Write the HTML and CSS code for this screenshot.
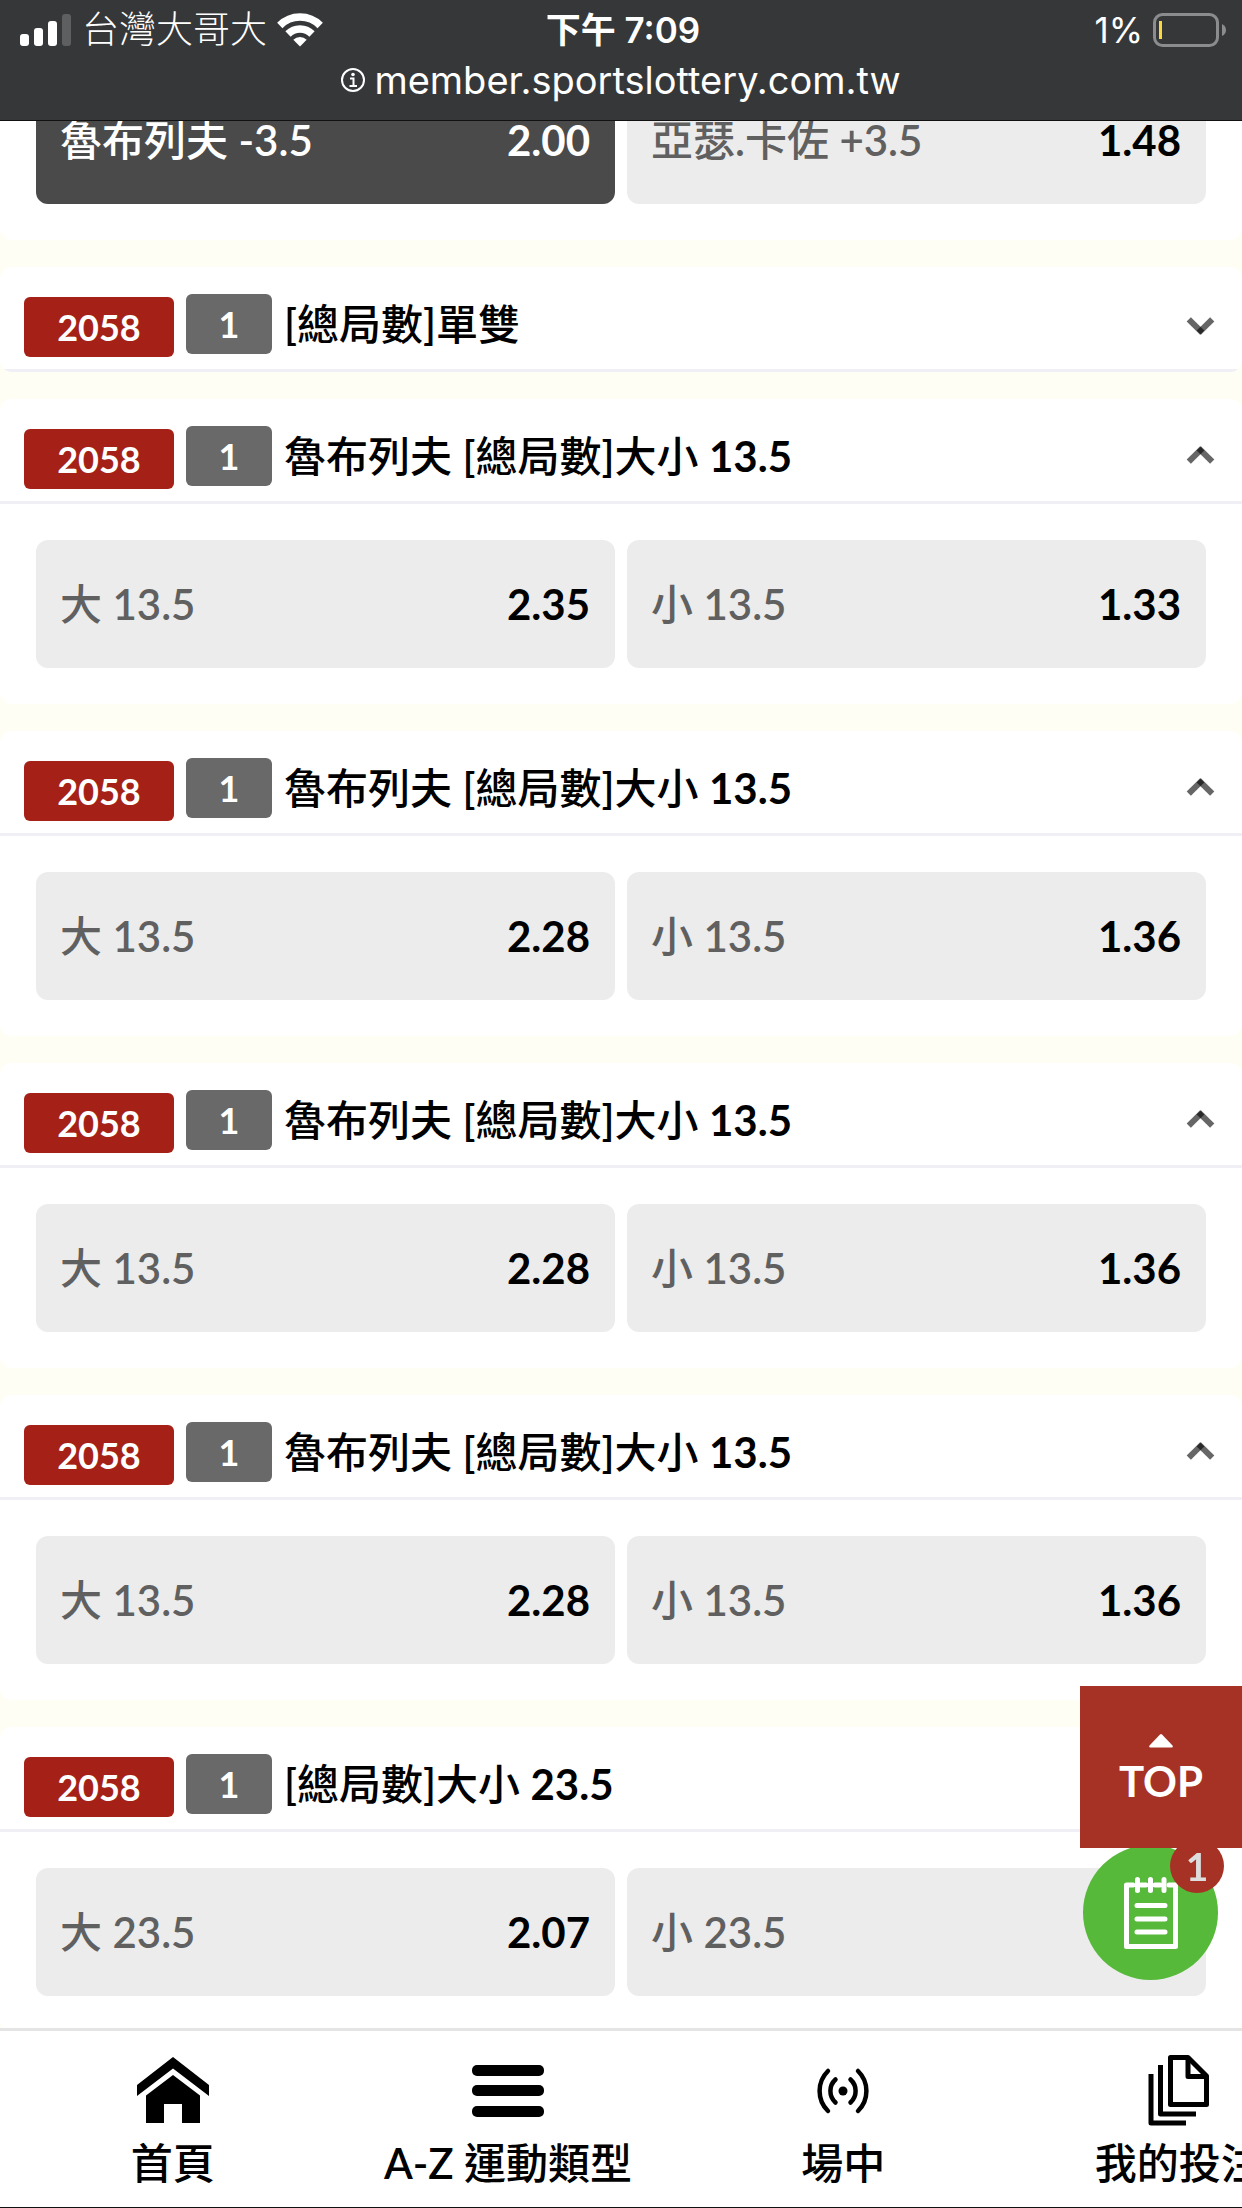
FILE: index.html
```html
<!DOCTYPE html>
<html lang="zh-Hant">
<head>
  <meta charset="UTF-8" />
  <meta name="viewport" content="width=device-width, initial-scale=1" />
  <title>台灣運彩</title>
  <link rel="stylesheet" href="styles.css">
</head>
<body>
  <header class="phone-bar">
    <div class="status">
      <div class="status-left">
        <svg class="signal" width="52" height="32" viewBox="0 0 52 32" fill="#fff" aria-hidden="true">
          <rect x="0" y="20" width="9" height="12" rx="3" />
          <rect x="14" y="14" width="9" height="18" rx="3" />
          <rect x="28" y="7" width="9" height="25" rx="3" />
          <rect x="42" y="0" width="9" height="32" rx="3" opacity="0.2" />
        </svg>
        <span class="carrier">台灣大哥大</span>
        <svg width="46" height="34" viewBox="0 0 46 34" fill="none" stroke="#fff" stroke-width="7.500" aria-hidden="true">
          <path d="M2.800 12.500a28.500 28.500 0 0 1 40.400 0" />
          <path d="M11 21a17 17 0 0 1 24 0" />
          <path d="M23 33.500l-6.700-6.700a9.500 9.500 0 0 1 13.400 0z" fill="#fff" stroke="none" />
        </svg>
      </div>
      <span class="clock">下午 7:09</span>
      <div class="status-right">
        <span>1%</span>
        <svg width="73" height="34" viewBox="0 0 73 34" fill="none" aria-hidden="true">
          <rect x="1.500" y="1.500" width="63" height="31" rx="8" stroke="#8b8c8d" stroke-width="3" />
          <rect x="6" y="8" width="3" height="18" fill="#fbd83f" />
          <path d="M69 11q4 2 4 6t-4 6z" fill="#8b8c8d" />
        </svg>
      </div>
    </div>
    <div class="address">
      <svg width="24" height="24" viewBox="0 0 24 24" fill="none" stroke="#fff" stroke-width="2" aria-hidden="true">
        <circle cx="12" cy="12" r="11" />
        <path d="M9 10.500h3.500V18M8.500 18h7.500" />
        <circle cx="12" cy="6.500" r="1.800" fill="#fff" stroke="none" />
      </svg>
      <span>member.sportslottery.com.tw</span>
    </div>
  </header>

  <main class="markets">
    <section class="card">
      <div class="options">
        <button class="option selected"><span>魯布列夫 -3.5</span><b>2.00</b></button>
        <button class="option"><span>亞瑟.卡佐 +3.5</span><b>1.48</b></button>
      </div>
    </section>

    <section class="card">
      <button class="card-head" aria-expanded="false">
        <span class="code">2058</span>
        <span class="count">1</span>
        <span class="title">[總局數]單雙</span>
        <span class="chevron"></span>
      </button>
    </section>

    <section class="card">
      <button class="card-head" aria-expanded="true">
        <span class="code">2058</span>
        <span class="count">1</span>
        <span class="title">魯布列夫 [總局數]大小 <b>13.5</b></span>
        <span class="chevron"></span>
      </button>
      <div class="options">
        <button class="option"><span>大 13.5</span><b>2.35</b></button>
        <button class="option"><span>小 13.5</span><b>1.33</b></button>
      </div>
    </section>

    <section class="card">
      <button class="card-head" aria-expanded="true">
        <span class="code">2058</span>
        <span class="count">1</span>
        <span class="title">魯布列夫 [總局數]大小 <b>13.5</b></span>
        <span class="chevron"></span>
      </button>
      <div class="options">
        <button class="option"><span>大 13.5</span><b>2.28</b></button>
        <button class="option"><span>小 13.5</span><b>1.36</b></button>
      </div>
    </section>

    <section class="card">
      <button class="card-head" aria-expanded="true">
        <span class="code">2058</span>
        <span class="count">1</span>
        <span class="title">魯布列夫 [總局數]大小 <b>13.5</b></span>
        <span class="chevron"></span>
      </button>
      <div class="options">
        <button class="option"><span>大 13.5</span><b>2.28</b></button>
        <button class="option"><span>小 13.5</span><b>1.36</b></button>
      </div>
    </section>

    <section class="card">
      <button class="card-head" aria-expanded="true">
        <span class="code">2058</span>
        <span class="count">1</span>
        <span class="title">魯布列夫 [總局數]大小 <b>13.5</b></span>
        <span class="chevron"></span>
      </button>
      <div class="options">
        <button class="option"><span>大 13.5</span><b>2.28</b></button>
        <button class="option"><span>小 13.5</span><b>1.36</b></button>
      </div>
    </section>

    <section class="card">
      <button class="card-head" aria-expanded="true">
        <span class="code">2058</span>
        <span class="count">1</span>
        <span class="title">[總局數]大小 <b>23.5</b></span>
      </button>
      <div class="options">
        <button class="option"><span>大 23.5</span><b>2.07</b></button>
        <button class="option"><span>小 23.5</span></button>
      </div>
    </section>
  </main>

  <button class="betslip" aria-label="投注單">
    <svg width="54" height="72" viewBox="0 0 54 72" fill="none" stroke="#fff" stroke-linecap="round" stroke-linejoin="round" aria-hidden="true">
      <path d="M9 8H2.500V69.500H51.500V8H45M17 8h5M31 8h5" stroke-width="5" />
      <path d="M13.500 2.500v11M26.500 2.500v11M40 2.500v11" stroke-width="5" />
      <path d="M13 28.500h28M13 42h28M13 55h28" stroke-width="5" />
    </svg>
    <span class="bet-count">1</span>
  </button>
  <button class="to-top">
    <svg width="24" height="14" viewBox="0 0 24 14" fill="#fff" aria-hidden="true">
      <path d="M11 0.500q1-1 2 0L23.500 11.500q1 2-1 2H1.500q-2 0-1-2z" />
    </svg>
    TOP
  </button>

  <nav class="tabs">
    <a href="#home">
      <svg width="72" height="72" viewBox="0 0 72 72" aria-hidden="true">
        <path d="M36 3L72 31V42L36 14.500L0 42V31z" />
        <path d="M36 21L63 41.500V69H45V50H27V69H9V41.500z" />
      </svg>
      首頁
    </a>
    <a href="#sports">
      <svg width="72" height="72" viewBox="0 0 72 72" aria-hidden="true">
        <rect x="0" y="11" width="72" height="11" rx="5" />
        <rect x="0" y="31" width="72" height="11" rx="5" />
        <rect x="0" y="52" width="72" height="11" rx="5" />
      </svg>
      A-Z 運動類型
    </a>
    <a href="#live">
      <svg width="72" height="72" viewBox="0 0 72 72" fill="none" stroke="#000" stroke-width="4.500" stroke-linecap="round" aria-hidden="true">
        <circle cx="36" cy="37" r="4.500" fill="#000" stroke="none" />
        <path d="M28.500 25.500a15.500 15.500 0 0 0 0 23M43.500 25.500a15.500 15.500 0 0 1 0 23" />
        <path d="M21 17a28 28 0 0 0 0 40M51 17a28 28 0 0 1 0 40" />
      </svg>
      場中
    </a>
    <a href="#bets">
      <svg width="72" height="72" viewBox="0 0 72 72" fill="none" stroke="#000" stroke-width="5" stroke-linejoin="round" aria-hidden="true">
        <path d="M27.500 3.500H45L63.500 22V50.500H27.500z" />
        <path d="M45 3.500V22.500H63.500" />
        <path d="M17.500 11V60H53" />
        <path d="M8 20V69H43" />
      </svg>
      我的投注
    </a>
  </nav>
</body>
</html>
```
FILE: styles.css
```css
* {
  box-sizing: border-box;
}
body {
  margin: 0;
  min-height: 100vh;
  background: #fffef5;
  color: #000;
  font-family: 'Lato Semibold', Lato, 'Noto Sans CJK TC', sans-serif;
  font-size: 42px;
  font-weight: 500;
  overflow-x: hidden;
}
button {
  border: none;
  padding: 0;
  font: inherit;
  color: inherit;
  cursor: pointer;
}
b,
.code,
.count,
.to-top,
.bet-count {
  font-family: Lato, sans-serif;
  font-weight: 700;
}

/* status bar + address */
.phone-bar {
  position: fixed;
  top: 0;
  left: 0;
  right: 0;
  z-index: 10;
  background: #363739;
  border-bottom: 1px solid #111;
  color: #fff;
  font-family: Inter, 'Noto Sans CJK TC', sans-serif;
  padding-bottom: 20px;
}
.status {
  display: grid;
  grid-template-columns: 1fr auto 1fr;
  align-items: center;
  height: 60px;
  padding: 0 16px 0 20px;
  font-size: 35px;
  font-weight: 400;
  line-height: 60px;
}
.status-left,
.status-right {
  display: flex;
  align-items: center;
  gap: 10px;
}
.status-right {
  justify-content: flex-end;
}
.carrier {
  font-size: 37px;
  font-weight: 300;
}
.clock {
  font-weight: 600;
}
.address {
  display: flex;
  align-items: center;
  justify-content: center;
  gap: 9px;
  height: 40px;
  font-size: 38px;
  font-weight: 400;
}

/* markets */
.markets {
  display: flex;
  flex-direction: column;
  gap: 27px;
  padding: 40px 0 176px;
}
.card {
  background: #fff;
  border-radius: 12px;
  overflow: hidden;
}
.card-head {
  display: flex;
  align-items: flex-start;
  gap: 12px;
  width: 100%;
  padding: 27px 28px 12px 24px;
  background: none;
  border-bottom: 3px solid #f0eff5;
  text-align: left;
}
.code,
.count {
  border-radius: 6px;
  color: #fff;
  font-size: 36px;
  line-height: 60px;
  text-align: center;
}
.code {
  width: 150px;
  height: 60px;
  margin-top: 3px;
  background: #a52117;
}
.count {
  width: 86px;
  background: #696969;
}
.title {
  flex: 1;
  line-height: 60px;
}
.chevron {
  align-self: center;
  position: relative;
  width: 27px;
  height: 18px;
}
.chevron::before,
.chevron::after {
  content: '';
  position: absolute;
  top: 6px;
  width: 19px;
  height: 6px;
  background: rgba(0, 0, 0, 0.6);
}
.chevron::before {
  left: -1px;
  transform: rotate(45deg);
}
.chevron::after {
  right: -1px;
  transform: rotate(-45deg);
}
.card-head[aria-expanded="true"] .chevron::before {
  top: 3px;
  transform: rotate(-45deg);
}
.card-head[aria-expanded="true"] .chevron::after {
  top: 3px;
  transform: rotate(45deg);
}
.options {
  display: grid;
  grid-template-columns: 1fr 1fr;
  gap: 12px;
  padding: 36px;
}
.option {
  display: flex;
  align-items: center;
  justify-content: space-between;
  height: 128px;
  padding: 0 25px 0 24px;
  background: #ececec;
  border-radius: 12px;
  color: #606060;
  line-height: 60px;
}
.option b {
  color: #000;
}
.option.selected,
.option.selected b {
  background: #4a4a4a;
  color: #fff;
}

/* floating buttons */
.to-top {
  position: fixed;
  right: 0;
  bottom: 360px;
  z-index: 6;
  display: flex;
  flex-direction: column;
  align-items: center;
  justify-content: center;
  gap: 8px;
  width: 162px;
  height: 162px;
  padding-top: 6px;
  background: #a63226;
  color: #fff;
  line-height: 50px;
}
.betslip {
  position: fixed;
  right: 24px;
  bottom: 228px;
  z-index: 5;
  display: flex;
  align-items: center;
  justify-content: center;
  width: 135px;
  height: 135px;
  border-radius: 50%;
  background: #56b93a;
}
.bet-count {
  position: absolute;
  top: -6px;
  right: -6px;
  width: 54px;
  height: 54px;
  border-radius: 50%;
  background: #a63226;
  color: #ddd;
  font-size: 39px;
  line-height: 54px;
}

/* bottom tabs */
.tabs {
  position: fixed;
  left: 0;
  right: 0;
  bottom: 0;
  z-index: 8;
  display: flex;
  height: 180px;
  padding-left: 5px;
  background: #fff;
  border-top: 3px solid #e4e4e4;
  border-bottom: 1px solid #111;
  overflow: hidden;
}
.tabs a {
  flex: 0 0 27vw;
  display: flex;
  flex-direction: column;
  align-items: center;
  padding-top: 23px;
  color: #000;
  line-height: 74px;
  text-decoration: none;
  white-space: nowrap;
}
```
